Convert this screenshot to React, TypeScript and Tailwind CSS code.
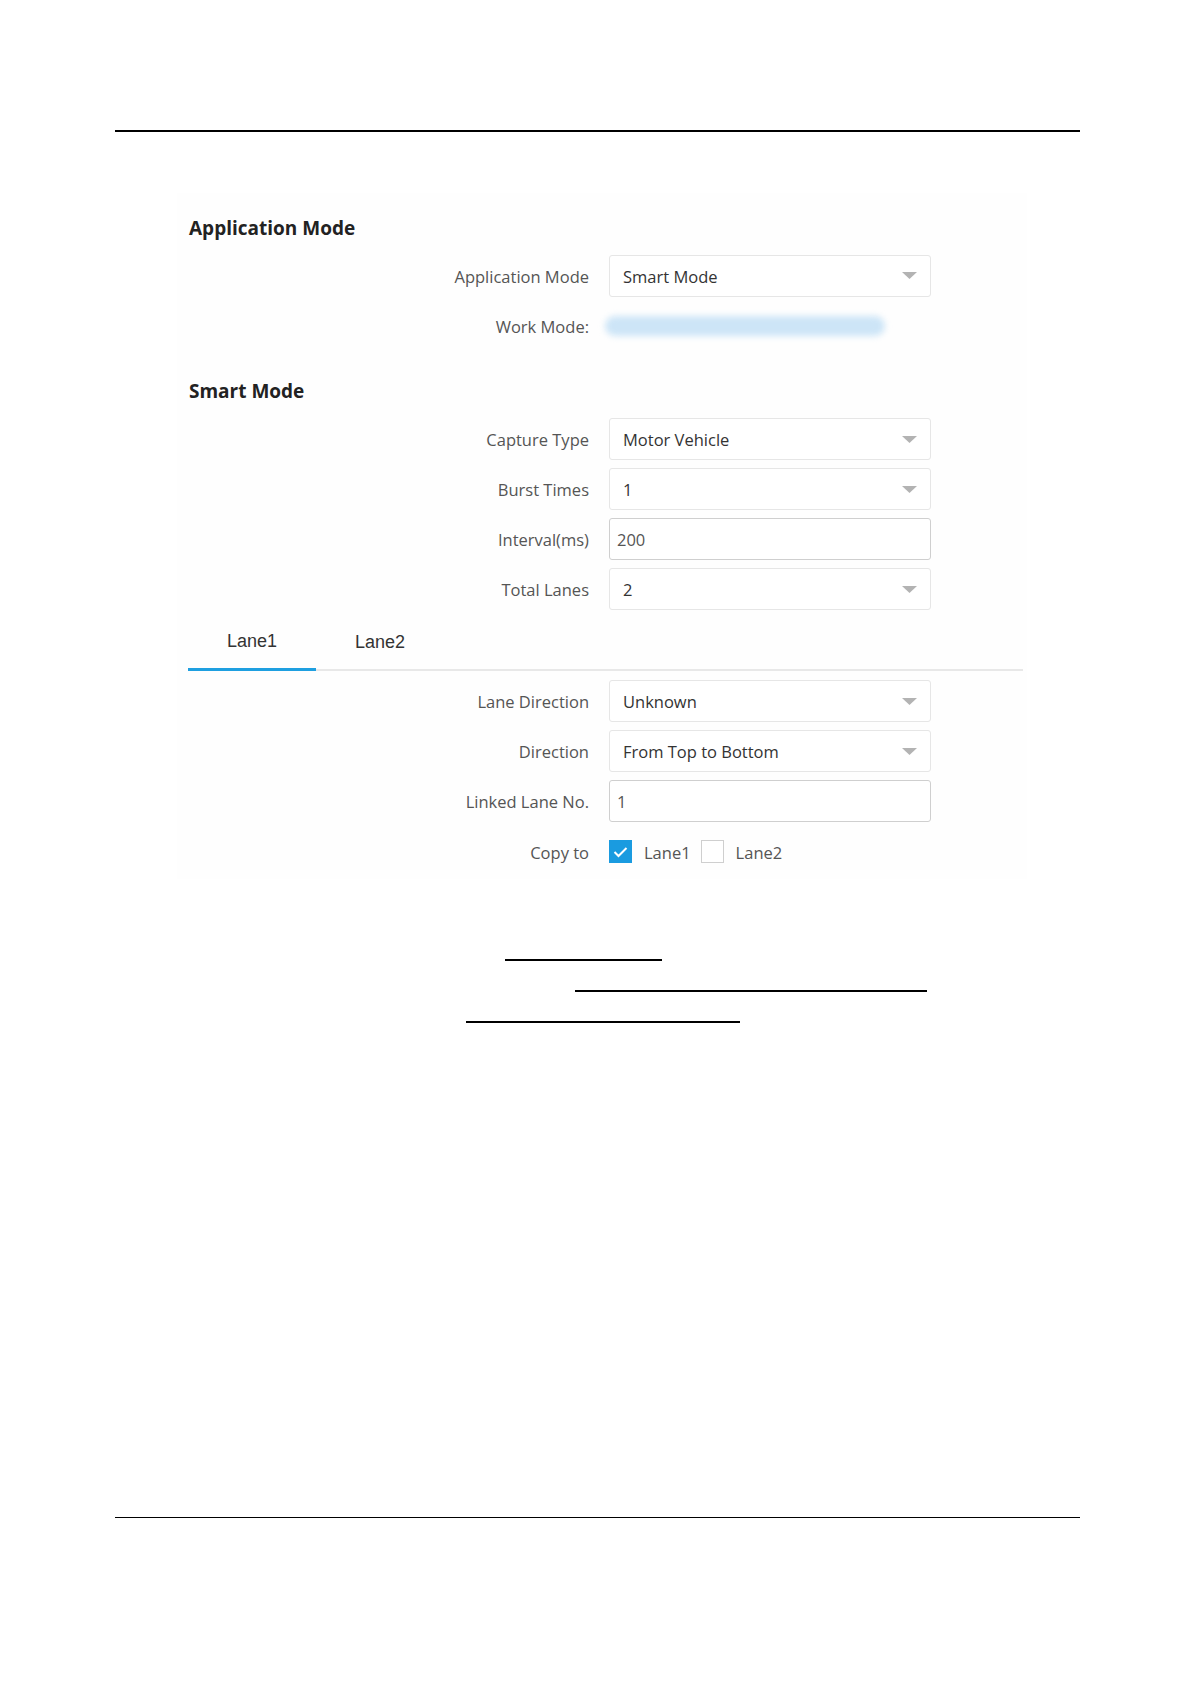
import { ReactNode } from 'react';

const font = { fontFamily: '"Open Sans", "Noto Sans", sans-serif' };

function Arrow() {
  return (
    <svg width="15" height="7" viewBox="0 0 15 7" className="shrink-0">
      <path d="M0 0 H15 L7.5 7 Z" fill="#b3b3b3" />
    </svg>
  );
}

function Row({ label, children, className = '' }: { label: string; children: ReactNode; className?: string }) {
  return (
    <div className={`flex items-center ${className}`}>
      <div className="w-[412px] shrink-0 pt-[3px] text-right text-[16.5px] text-[#555]">{label}</div>
      <div className="ml-[20px]">{children}</div>
    </div>
  );
}

function Select({ value }: { value: string }) {
  return (
    <div className="flex h-[42px] w-[322px] items-center justify-between rounded-[3px] border border-[#e6e6e6] bg-white pl-[13px] pr-[13px] text-[16.5px] text-[#333]">
      <span className="pt-[3px]">{value}</span>
      <Arrow />
    </div>
  );
}

function Input({ value }: { value: string }) {
  return (
    <div className="flex h-[42px] w-[322px] items-center rounded-[3px] border border-[#cfcfcf] bg-white pl-[7px] pt-[2px] text-[16.5px] text-[#555]">
      {value}
    </div>
  );
}

export default function App() {
  return (
    <div className="min-h-[1685px] w-[1181px] bg-white pt-[130px]" style={font}>
      <div className="ml-[115px] h-[2px] w-[965px] bg-black" />

      <div className="ml-[177px] mt-[61px] w-[850px] bg-[#fefefe] pb-[16px] pt-[23px]">
        <div className="pl-[12px] text-[19px] font-bold leading-[24px] text-[#222]">Application Mode</div>

        <Row label="Application Mode" className="mt-[15px] h-[41px]">
          <Select value="Smart Mode" />
        </Row>
        <Row label="Work Mode:" className="mt-[17px] h-[26px]">
          <div className="-ml-[4px] h-[20px] w-[280px] rounded-full bg-[#cde5f7] blur-[3px]" />
        </Row>

        <div className="mt-[40px] pl-[12px] text-[19px] font-bold leading-[24px] text-[#222]">Smart Mode</div>

        <div className="mt-[15px] flex flex-col gap-[8px]">
          <Row label="Capture Type">
            <Select value="Motor Vehicle" />
          </Row>
          <Row label="Burst Times">
            <Select value="1" />
          </Row>
          <Row label="Interval(ms)">
            <Input value="200" />
          </Row>
          <Row label="Total Lanes">
            <Select value="2" />
          </Row>
        </div>

        <div
          className="ml-[11px] flex w-[835px] border-b-2 border-[#e8e8e8] text-[18px] text-[#333]"
          style={{ fontFamily: '"Liberation Sans", Arial, sans-serif' }}
        >
          <div className="-mb-[2px] flex h-[61px] w-[128px] items-center justify-center border-b-[3px] border-[#1e9fe0] pt-[5px]">
            Lane1
          </div>
          <div className="flex h-[59px] w-[128px] items-center justify-center pt-[5px]">Lane2</div>
        </div>

        <div className="mt-[9px] flex flex-col gap-[8px]">
          <Row label="Lane Direction">
            <Select value="Unknown" />
          </Row>
          <Row label="Direction">
            <Select value="From Top to Bottom" />
          </Row>
          <Row label="Linked Lane No.">
            <Input value="1" />
          </Row>
        </div>

        <Row label="Copy to" className="mt-[18px] h-[23px]">
          <div className="flex items-center text-[16.5px] text-[#555]">
            <div className="flex h-[23px] w-[23px] items-center justify-center bg-[#1a9be0]">
              <svg width="15" height="12" viewBox="0 0 15 12">
                <path d="M1.5 6 L5.5 10 L13.5 2" fill="none" stroke="white" strokeWidth="2" />
              </svg>
            </div>
            <span className="ml-[12px] pt-[3px]">Lane1</span>
            <div className="ml-[10px] h-[23px] w-[23px] border border-[#cfcfcf] bg-white" />
            <span className="ml-[12px] pt-[3px]">Lane2</span>
          </div>
        </Row>
      </div>

      <div className="ml-[505px] mt-[80px] h-[1.5px] w-[157px] bg-black" />
      <div className="ml-[575px] mt-[29.5px] h-[1.5px] w-[352px] bg-black" />
      <div className="ml-[466px] mt-[29.5px] h-[1.5px] w-[274px] bg-black" />

      <div className="ml-[115px] mt-[494px] h-[1.5px] w-[965px] bg-black" />
    </div>
  );
}
